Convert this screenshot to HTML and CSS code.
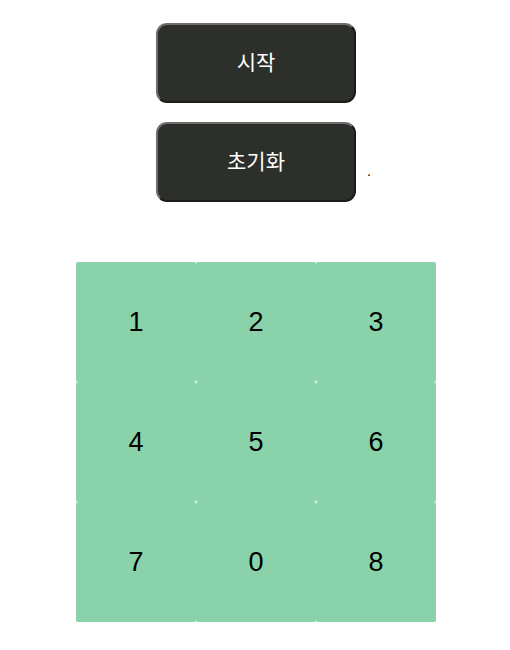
FILE: index.html
```html
<!DOCTYPE html>
<html lang="ko">
<head>
<meta charset="utf-8">
<link rel="stylesheet" href="styles.css">
</head>
<body>
<div class="controls">
  <div class="row">
    <span></span>
    <button class="btn">시작</button>
    <span></span>
  </div>
  <div class="row">
    <span></span>
    <button class="btn">초기화</button>
    <span class="dot">.</span>
  </div>
</div>
<div class="pad">
  <div class="cell">1</div>
  <div class="cell">2</div>
  <div class="cell">3</div>
  <div class="cell">4</div>
  <div class="cell">5</div>
  <div class="cell">6</div>
  <div class="cell">7</div>
  <div class="cell">0</div>
  <div class="cell">8</div>
</div>
</body>
</html>
```
FILE: styles.css
```css
html, body {
  margin: 0;
  padding: 0;
  background: #ffffff;
}
body {
  font-family: "Liberation Sans", Arial, "Noto Sans CJK KR", sans-serif;
  padding: 23px 0 0 0;
}
.controls {
  display: flex;
  flex-direction: column;
  gap: 19px;
}
.row {
  display: grid;
  grid-template-columns: 1fr 200px 1fr;
  margin-left: 2px;
}
.btn {
  width: 200px;
  height: 80px;
  box-sizing: border-box;
  background: #2d302a;
  color: #ffffff;
  border: 2px solid #6e6e6e;
  border-right-color: #1b1b1b;
  border-bottom-color: #1b1b1b;
  border-radius: 11px;
  font-family: "Noto Sans CJK KR", sans-serif;
  font-size: 21px;
  line-height: 1;
  padding: 0 0 3px 0;
}
.dot {
  align-self: end;
  margin-left: 11px;
  margin-bottom: 24px;
  font-size: 14px;
  line-height: 14px;
  color: #000;
}
.pad {
  margin: 60px auto 0 auto;
  width: 360px;
  display: grid;
  grid-template-columns: repeat(3, 120px);
  grid-auto-rows: 120px;
  position: relative;
  left: 1px;
}
.cell {
  background: #89d2aa;
  border-radius: 2px;
  display: flex;
  align-items: center;
  justify-content: center;
  font-size: 27px;
  color: #000;
}
```
